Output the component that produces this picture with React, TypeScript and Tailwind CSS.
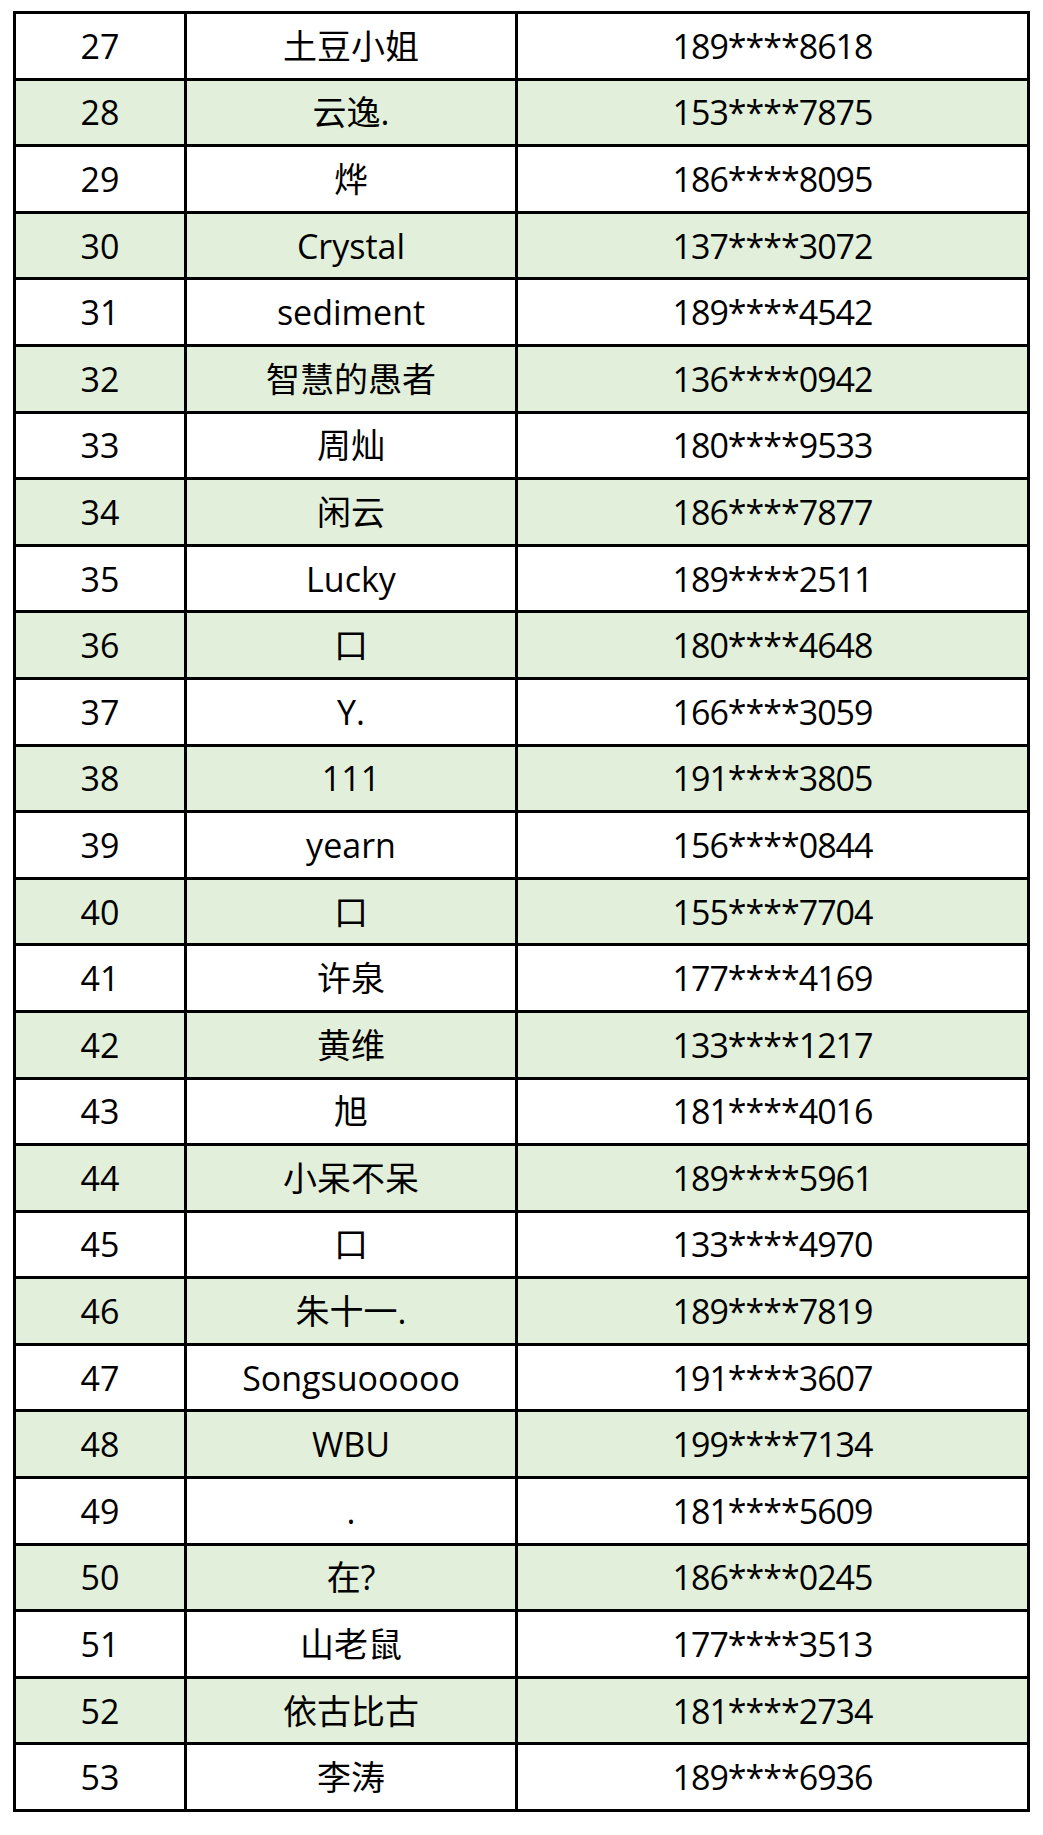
import React from 'react';

const rows: [number, string, string][] = [
    [27, '土豆小姐', '189****8618'],
    [28, '云逸.', '153****7875'],
    [29, '烨', '186****8095'],
    [30, 'Crystal', '137****3072'],
    [31, 'sediment', '189****4542'],
    [32, '智慧的愚者', '136****0942'],
    [33, '周灿', '180****9533'],
    [34, '闲云', '186****7877'],
    [35, 'Lucky', '189****2511'],
    [36, '口', '180****4648'],
    [37, 'Y.', '166****3059'],
    [38, '111', '191****3805'],
    [39, 'yearn', '156****0844'],
    [40, '口', '155****7704'],
    [41, '许泉', '177****4169'],
    [42, '黄维', '133****1217'],
    [43, '旭', '181****4016'],
    [44, '小呆不呆', '189****5961'],
    [45, '口', '133****4970'],
    [46, '朱十一.', '189****7819'],
    [47, 'Songsuooooo', '191****3607'],
    [48, 'WBU', '199****7134'],
    [49, '.', '181****5609'],
    [50, '在?', '186****0245'],
    [51, '山老鼠', '177****3513'],
    [52, '依古比古', '181****2734'],
    [53, '李涛', '189****6936'],
];

const cell = 'h-[66.6px] flex items-center justify-center border-r-[3px] border-b-[3px] border-black';

export default function App() {
    return (
        <div className="w-[1043px] h-[1835px] bg-white pt-[11px] pl-[13px]">
            <div
                className="w-[1017px] grid grid-cols-[171px_331px_512px] border-t-[3px] border-l-[3px] border-black text-black text-[34px] leading-none"
                style={{ fontFamily: '"Open Sans", "Noto Sans CJK SC", sans-serif' }}
            >
                {rows.map(([no, name, phone]) => {
                    const bg = no % 2 === 0 ? 'bg-[#e2efda]' : 'bg-white';
                    return (
                        <React.Fragment key={no}>
                            <div className={`${cell} ${bg}`}>{no}</div>
                            <div className={`${cell} ${bg}`}>{name}</div>
                            <div className={`${cell} ${bg} tracking-[-1px]`}>{phone}</div>
                        </React.Fragment>
                    );
                })}
            </div>
        </div>
    );
}
